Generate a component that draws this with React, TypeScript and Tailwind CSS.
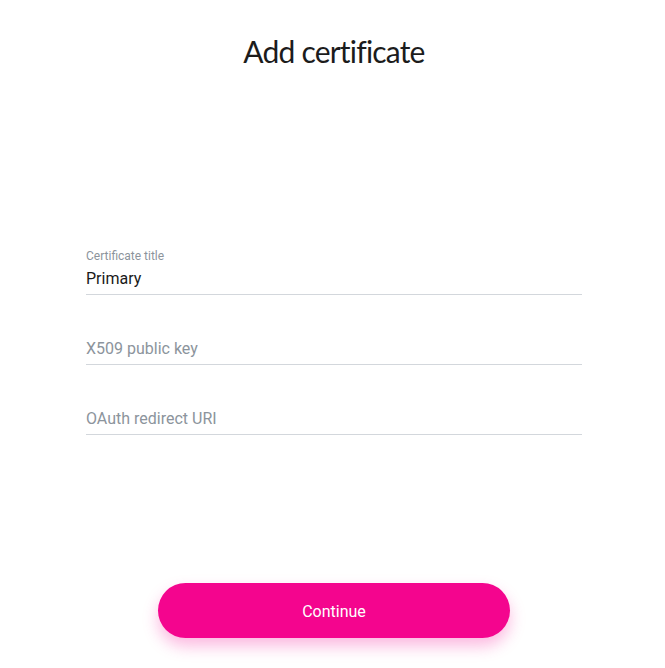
import React from "react";

function Field({ label, value, placeholder }: { label?: string; value?: string; placeholder: string }) {
  return (
    <div className="flex flex-col justify-end h-[70px] border-b border-[#d3d7dc] pb-[3px]">
      {label && <div className="text-[12px] leading-[14px] text-[#8c949c] mb-[4px]">{label}</div>}
      <div className={"text-[16px] leading-[24px] " + (value ? "text-[#1a1a1a]" : "text-[#8c949c]")}>
        {value ?? placeholder}
      </div>
    </div>
  );
}

export default function App() {
  return (
    <div className="min-h-[668px] bg-white flex flex-col items-center pl-[3px] font-['Roboto',sans-serif]">
      <h1 className="mt-[31px] text-[30px] leading-[40px] tracking-[-0.8px] text-[#1c1c1c] font-['Lato',sans-serif] font-normal">
        Add certificate
      </h1>
      <div className="w-[496px] mt-[154px] flex flex-col">
        <Field label="Certificate title" value="Primary" placeholder="Certificate title" />
        <Field placeholder="X509 public key" />
        <Field placeholder="OAuth redirect URI" />
      </div>
      <button className="mt-[148px] w-[352px] h-[55px] pt-[2px] rounded-full bg-[#f4058e] text-white text-[16px] shadow-[0_8px_16px_rgba(244,5,142,0.28)]">
        Continue
      </button>
    </div>
  );
}
